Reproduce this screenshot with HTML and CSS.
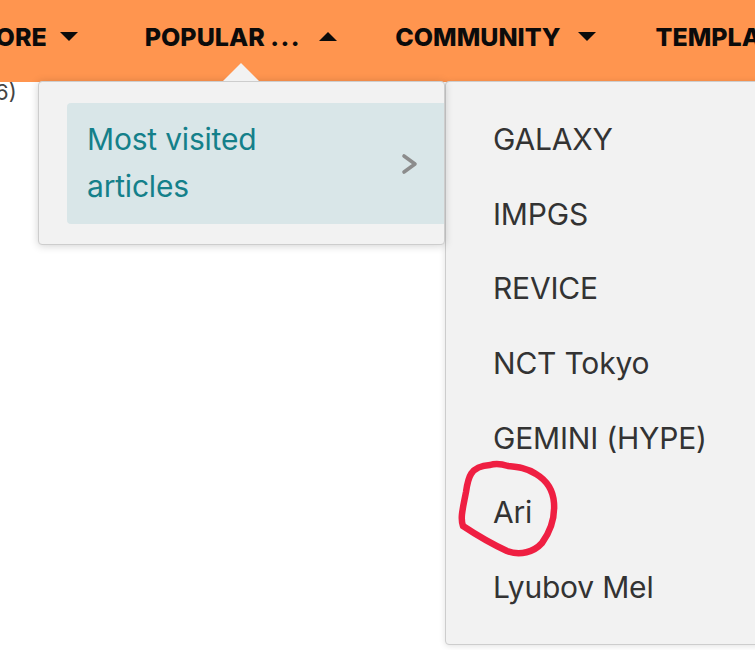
FILE: index.html
```html
<!DOCTYPE html>
<html lang="en">
<head>
<meta charset="utf-8">
<title>Menu</title>
<link rel="stylesheet" href="styles.css">
</head>
<body>
<header class="navbar">
  <ul class="nav-list">
    <li class="nav-item nav-item--first"><span class="nav-label">MORE</span><svg class="caret" viewBox="0 0 18 9" width="18" height="9"><path d="M0 0H18L9 9Z"/></svg></li>
    <li class="nav-item nav-item--open"><span class="nav-label">POPULAR <span class="dots">...</span></span><svg class="caret" viewBox="0 0 18 9" width="18" height="9"><path d="M0 9H18L9 0Z"/></svg></li>
    <li class="nav-item nav-item--community"><span class="nav-label">COMMUNITY</span><svg class="caret" viewBox="0 0 18 9" width="18" height="9"><path d="M0 0H18L9 9Z"/></svg></li>
    <li class="nav-item"><span class="nav-label">TEMPLATES</span></li>
  </ul>
</header>
<main class="page">
  <p class="page-text">(6)</p>
</main>
<div class="dropdown">
  <div class="menu menu--primary">
    <a class="menu-row menu-row--active" href="#">
      <span class="menu-row-text">Most visited<br>articles</span>
      <svg class="chevron" viewBox="0 0 18 22" width="18" height="22"><path d="M3 3L14 11L3 19" fill="none" stroke="#8c8c8c" stroke-width="3.6" stroke-linecap="round" stroke-linejoin="round"/></svg>
    </a>
  </div>
  <ul class="menu menu--sub">
    <li class="sub-item">GALAXY</li>
    <li class="sub-item">IMPGS</li>
    <li class="sub-item">REVICE</li>
    <li class="sub-item">NCT Tokyo</li>
    <li class="sub-item">GEMINI (HYPE)</li>
    <li class="sub-item">Ari</li>
    <li class="sub-item">Lyubov Mel</li>
  </ul>
</div>
<svg class="scribble" viewBox="0 0 755 650" width="755" height="650">
  <path d="M490 465 C470 466 468 478 466 492 C463 508 460 518 463 526 C478 536 492 544 507 551 C520 556 534 552 542 543 C550 532 555 518 554 503 C553 489 546 480 536 474 C527 468 518 467 508 466 C502 464 496 463 490 465"
        fill="none" stroke="#ef1f42" stroke-width="6.5" stroke-linecap="round" stroke-linejoin="round"/>
</svg>
</body>
</html>
```

FILE: styles.css
```css
* { box-sizing: border-box; }

html, body {
  margin: 0;
  padding: 0;
  width: 755px;
  height: 650px;
  overflow: hidden;
  background: #ffffff;
}

body {
  position: relative;
  font-family: Inter, "Noto Sans", sans-serif;
}

.navbar {
  height: 82px;
  background: #ff954f;
  display: flex;
  align-items: center;
  overflow: hidden;
}

.nav-list {
  list-style: none;
  margin: 0 0 0 -28px;
  padding: 0;
  display: flex;
  align-items: center;
  white-space: nowrap;
  padding-bottom: 9px;
}

.nav-item {
  display: flex;
  align-items: center;
  gap: 14px;
  color: #0b0b0b;
  font-weight: 800;
  font-size: 25px;
  margin-right: 60px;
}

.nav-item--first { gap: 13px; margin-right: 67px; }
.nav-item--open { gap: 18px; margin-right: 58px; }
.nav-item--community { gap: 17px; margin-right: 60px; }

.dots { letter-spacing: 1.5px; }

.caret { fill: #0b0b0b; display: block; }

.page { padding: 0; }

.page-text {
  margin: 0;
  margin-left: -13px;
  font-size: 22px;
  color: #444;
  line-height: 20px;
}

.dropdown {
  position: absolute;
  top: 81px;
  left: 0;
  display: flex;
  align-items: flex-start;
}

.menu {
  background: #f2f2f2;
  border: 1px solid #cdcdcd;
  border-radius: 4px;
  margin: 0;
  list-style: none;
}

.menu--primary {
  position: relative;
  margin-left: 38px;
  width: 407px;
  padding: 21px 0 20px 28px;
  box-shadow: 0 1px 8px rgba(0, 0, 0, 0.18);
}

.menu--primary::before {
  content: "";
  position: absolute;
  top: -19px;
  left: 184px;
  border-left: 18px solid transparent;
  border-right: 18px solid transparent;
  border-bottom: 18px solid #f2f2f2;
}

.menu-row {
  display: flex;
  align-items: center;
  justify-content: space-between;
  background: #d9e6e8;
  border-radius: 4px 0 0 4px;
  padding: 13px 25px 14px 20px;
  text-decoration: none;
  color: #14808a;
  font-size: 30px;
  line-height: 47px;
  letter-spacing: -0.2px;
}

.chevron { display: block; margin-top: 2px; }

.menu--sub {
  width: 330px;
  height: 564px;
  padding: 20px 0 0 47px;
  box-shadow: 0 1px 6px rgba(0, 0, 0, 0.12);
}

.sub-item {
  color: #333333;
  font-size: 30px;
  line-height: 46.67px;
  padding: 14px 0;
  letter-spacing: -0.2px;
}

.scribble {
  position: absolute;
  top: 0;
  left: 0;
  pointer-events: none;
}
```
